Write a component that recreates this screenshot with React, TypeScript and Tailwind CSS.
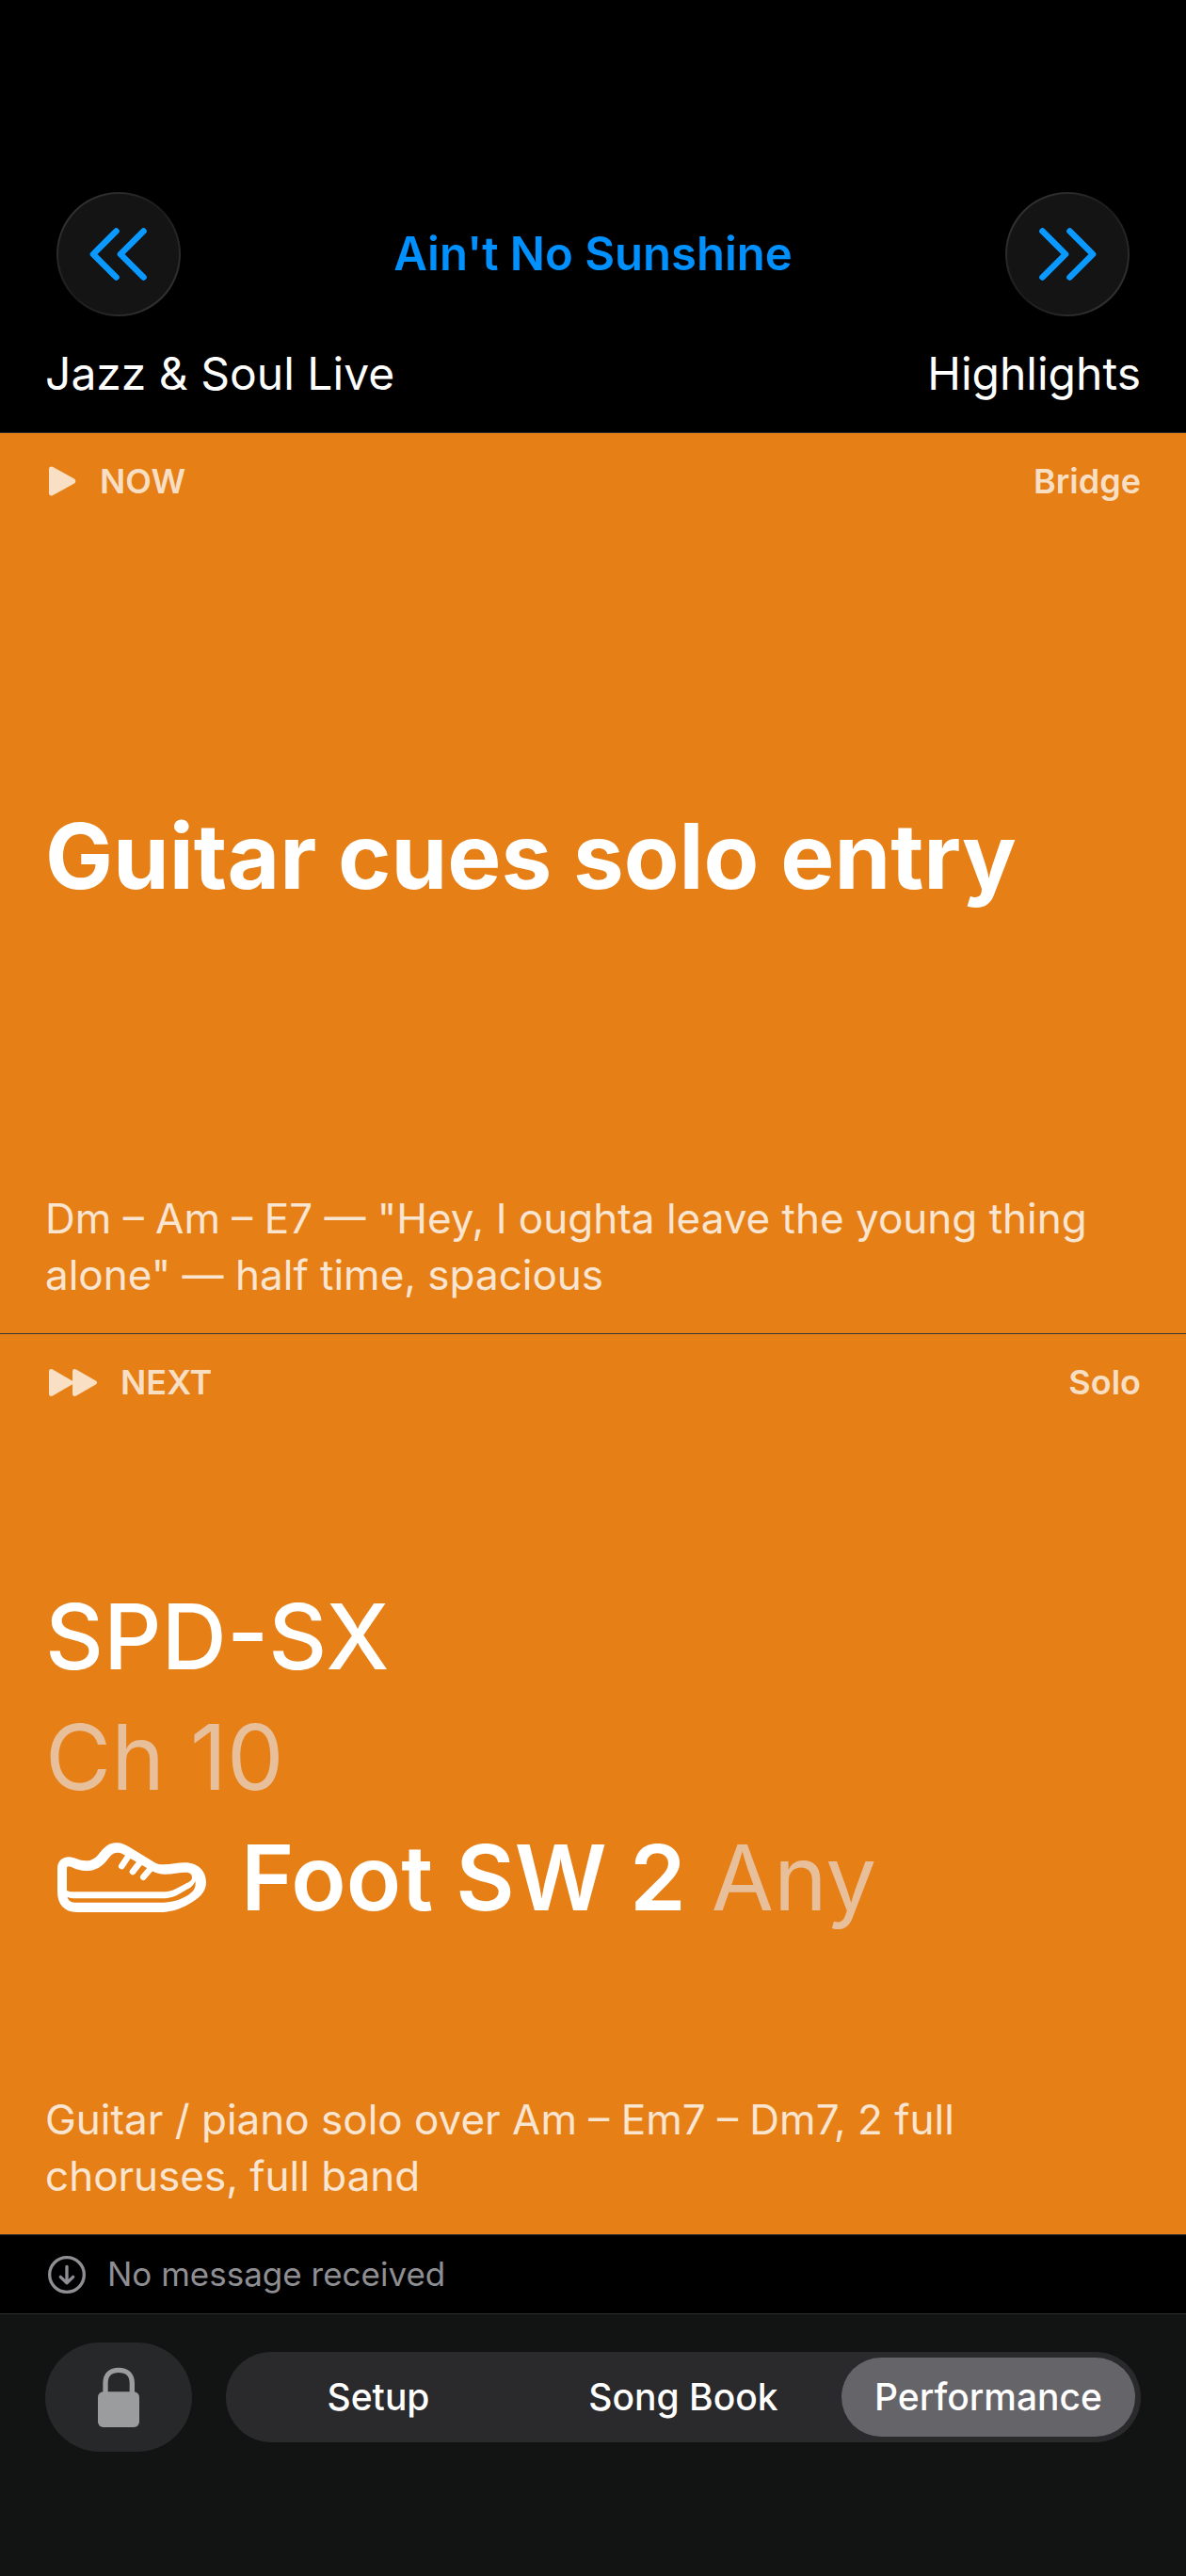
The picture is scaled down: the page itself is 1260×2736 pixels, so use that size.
import React, { useState } from 'react';

const tabs = ['Setup', 'Song Book', 'Performance'];

const DoubleChevron: React.FC<{ flip?: boolean }> = ({ flip }) => (
    <svg
        viewBox="0 0 62 56"
        className={flip ? 'h-14 w-[62px] -scale-x-100' : 'h-14 w-[62px]'}
        fill="none"
        stroke="currentColor"
        strokeWidth="6.600"
        strokeLinecap="round"
        strokeLinejoin="round"
        aria-hidden="true"
    >
        <path d="M28.5 3.5 4 28l24.5 24.5M57.5 3.5 33 28l24.5 24.5" />
    </svg>
);

const PlayIcon: React.FC = () => (
    <svg viewBox="0 0 30 32" className="h-8 w-[30px]" fill="currentColor" aria-hidden="true">
        <path d="M0 3.2C0 .8 2.200-.2 4.300 1L26.500 13.300c2.400 1.300 2.400 4.100 0 5.400L4.300 31C2.200 32.200 0 31.200 0 28.800z" />
    </svg>
);

const ForwardIcon: React.FC = () => (
    <svg viewBox="156 162 156 87" className="h-[29px] w-[52px]" fill="currentColor" aria-hidden="true">
        <path d="M156 170c0-7 6-10 13-6l62 36V170c0-7 6-10 13-6l60 35c7 4 7 9 0 13l-60 35c-7 4-13 1-13-6v-30l-62 36c-7 4-13 1-13-6z" />
    </svg>
);

const ShoeIcon: React.FC = () => (
    <svg viewBox="60 80 480 228" className="h-[76px] w-40" fill="currentColor" aria-hidden="true">
        <path
            fillRule="evenodd"
            d="M63 165C63 142 80 129 100 129C118 129 130 141 155 141C190 141 195 110 222 92C232 85 243 84 254 84C268 84 278 89 290 96L372 146C382 152 390 153 402 153C425 153 445 147 470 147C510 147 537 173 537 210C537 240 515 262 480 280C450 296 425 305 385 305H125C85 305 63 280 63 240Z
            M93 165C93 158 97 157 105 160C122 167 135 173 158 173C195 173 215 148 230 128C240 115 256 112 270 119L365 174C378 181 390 184 405 184C430 184 450 178 472 178C487 178 492 185 492 194C492 205 480 210 470 215L435 233C420 240 405 240 385 240H125C110 240 100 240 93 236Z
            M95 256C100 260 110 261 125 261H390C415 261 428 258 445 250L475 233C490 226 497 218 502 206C506 225 497 240 480 250C450 268 425 274 390 274H125C105 274 98 268 95 256Z"
        />
        <path
            d="M288 128 268 158M325 148 303 176M360 166 337 193"
            stroke="currentColor"
            strokeWidth="20"
            strokeLinecap="round"
        />
    </svg>
);

const ReceiveIcon: React.FC = () => (
    <svg
        viewBox="150 135 126 126"
        className="size-[42px]"
        fill="none"
        stroke="currentColor"
        strokeWidth="10"
        strokeLinecap="round"
        strokeLinejoin="round"
        aria-hidden="true"
    >
        <circle cx="213" cy="198" r="55" />
        <path d="M213 172v52M193 205l20 19 20-19" />
    </svg>
);

const LockIcon: React.FC = () => (
    <svg viewBox="309 492 138 192" className="h-16 w-[46px]" aria-hidden="true">
        <rect x="312" y="571" width="132" height="113" rx="17" fill="currentColor" />
        <path
            d="M336 575V543C336 516 354 502 378 502C403 502 421 516 421 543V575"
            fill="none"
            stroke="currentColor"
            strokeWidth="16"
        />
    </svg>
);

const SkipButton: React.FC<{ label: string; flip?: boolean }> = ({ label, flip }) => (
    <button
        aria-label={label}
        className="size-[132px] rounded-full bg-linear-135 from-[#3a3a3a] via-[#1c1c1c] to-[#3a3a3a] p-0.5 text-[#0a99ff]"
    >
        <span className="flex size-full items-center justify-center rounded-full bg-[#141414]">
            <DoubleChevron flip={flip} />
        </span>
    </button>
);

interface CueProps {
    icon: React.ReactNode;
    label: string;
    section: string;
    note: string;
    children: React.ReactNode;
}

const Cue: React.FC<CueProps> = ({ icon, label, section, note, children }) => (
    <section className="flex flex-col bg-[#e57f16] px-12 pb-8 text-white">
        <div className="flex items-center justify-between pt-[30px] pb-[22px] text-[36px] leading-[42px] font-semibold text-white/75">
            <div className="flex items-center gap-6 pl-1">
                {icon}
                <h2>{label}</h2>
            </div>
            <span>{section}</span>
        </div>
        <div className="flex flex-1 flex-col justify-center text-8xl leading-[128px]">{children}</div>
        <p className="text-[44px] leading-[60px] text-white/80">{note}</p>
    </section>
);

const App: React.FC = () => {
    const [tab, setTab] = useState('Performance');

    return (
        <div className="flex min-h-screen flex-col bg-black font-['Inter',sans-serif]">
            <header className="border-b border-[#2b2c2e] pt-[204px] pb-8 text-white">
                <div className="flex items-center justify-between px-[60px]">
                    <SkipButton label="Previous song" />
                    <h1 className="text-[49px] leading-[60px] font-semibold text-[#0091ff]">Ain't No Sunshine</h1>
                    <SkipButton label="Next song" flip />
                </div>
                <div className="mt-[31px] flex justify-between px-12 text-5xl leading-[60px]">
                    <span>Jazz &amp; Soul Live</span>
                    <span>Highlights</span>
                </div>
            </header>

            <main className="grid flex-1 grid-rows-[1fr_1px_1fr]">
                <Cue
                    icon={<PlayIcon />}
                    label="NOW"
                    section="Bridge"
                    note={'Dm – Am – E7 — "Hey, I oughta leave the young thing alone" — half time, spacious'}
                >
                    <p className="font-bold">Guitar cues solo entry</p>
                </Cue>
                <div className="bg-[#343638]" />
                <Cue
                    icon={<ForwardIcon />}
                    label="NEXT"
                    section="Solo"
                    note="Guitar / piano solo over Am – Em7 – Dm7, 2 full choruses, full band"
                >
                    <p className="font-medium">SPD-SX</p>
                    <p className="text-[#e8bf9b]">Ch 10</p>
                    <div className="flex items-center gap-9 pl-3">
                        <ShoeIcon />
                        <p>
                            <span className="font-semibold">Foot SW 2</span> <span className="text-[#e8bf9b]">Any</span>
                        </p>
                    </div>
                </Cue>
            </main>

            {/* MIDI status */}
            <div className="flex h-[84px] items-center gap-[22px] border-t border-[#2b2c2e] px-[50px] text-[35px] text-[#8e8e93]">
                <ReceiveIcon />
                <span>No message received</span>
            </div>

            <footer className="flex items-center gap-9 border-t border-[#2e3030] bg-[#121413] px-12 pt-[30px] pb-[132px]">
                <button
                    aria-label="Lock"
                    className="flex h-[116px] w-[156px] items-center justify-center rounded-full bg-[#272829] text-[#9b9c9e]"
                >
                    <LockIcon />
                </button>
                <nav className="flex h-24 flex-1 rounded-full bg-[#2a2a2c]">
                    {tabs.map((name) => (
                        <div key={name} className="flex flex-1 p-1.5">
                            <button
                                onClick={() => setTab(name)}
                                aria-pressed={tab === name}
                                className={`flex-1 rounded-full text-[39px] font-medium text-white ${tab === name ? 'bg-[#656469]' : ''}`}
                            >
                                {name}
                            </button>
                        </div>
                    ))}
                </nav>
            </footer>
        </div>
    );
};

export default App;
